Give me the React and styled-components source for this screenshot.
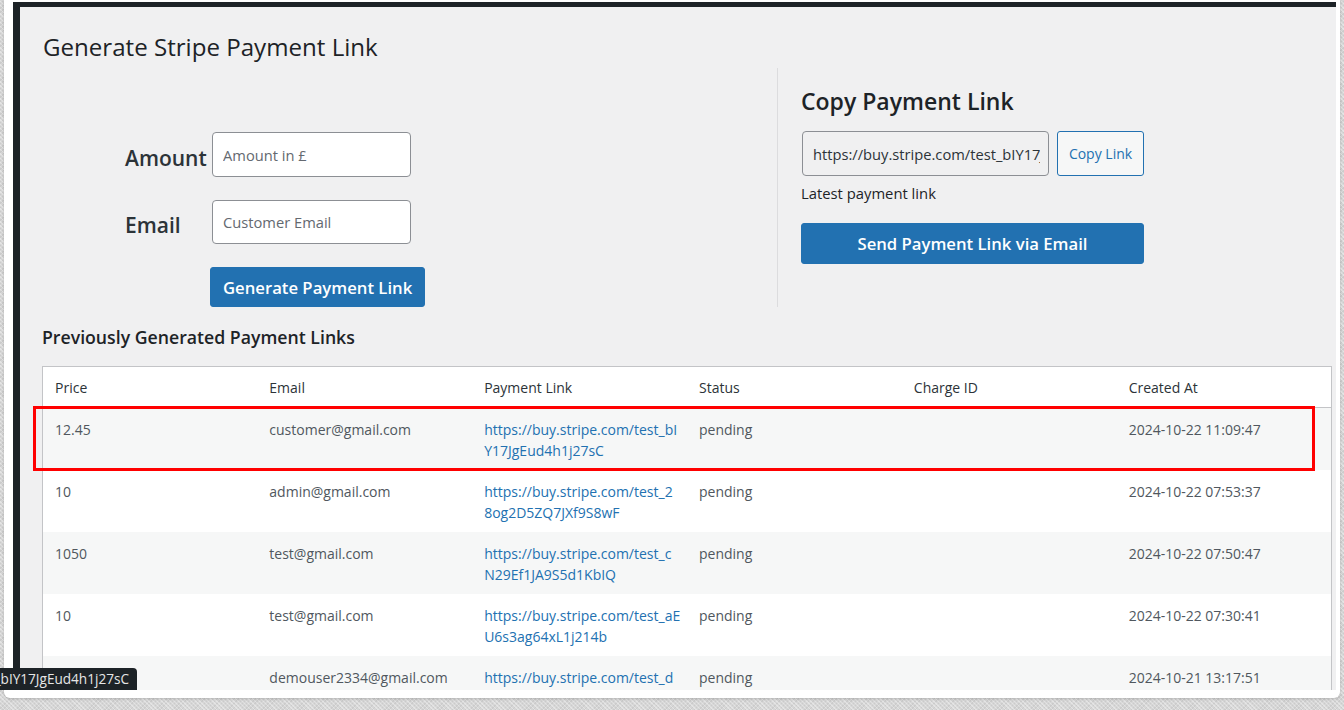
import React from "react";
import styled, { createGlobalStyle } from "styled-components";

const Global = createGlobalStyle`
  html, body { margin: 0; padding: 0; }
  body {
    width: 1344px;
    height: 710px;
    overflow: hidden;
    background-color: #d6d6d6;
    background-image:
      repeating-linear-gradient(45deg, rgba(255,255,255,0.35) 0 1px, transparent 1px 3px),
      repeating-linear-gradient(-45deg, rgba(0,0,0,0.05) 0 1px, transparent 1px 3px);
    font-family: "Open Sans", "Noto Sans", Arial, sans-serif;
    color: #3c434a;
  }
`;

const Frame = styled.div`
  position: relative;
  box-sizing: border-box;
  margin: -6px 0 0 4px;
  width: 1336px;
  height: 704px;
  padding: 8px 4px 8px 9px;
  background: #fff;
  border-radius: 6px;
  box-shadow: 0 1px 3px rgba(0,0,0,0.18);
`;

const Window = styled.div`
  box-sizing: border-box;
  height: 100%;
  border-top: 5px solid #1d2327;
  border-left: 7px solid #1d2327;
  background: #f0f0f1;
  overflow: hidden;
`;

const Wrap = styled.div`
  padding: 0 4px 0 22px;
`;

const Title = styled.h1`
  margin: 25px 0 0 1px;
  font-size: 24.1px;
  line-height: 30px;
  font-weight: 400;
  color: #1d2327;
`;

const Columns = styled.div`
  display: flex;
  margin-top: 6px;
  height: 239px;
`;

const LeftCol = styled.div`
  box-sizing: border-box;
  width: 735px;
  padding: 64px 0 0 83px;
`;

const FormGrid = styled.div`
  display: grid;
  grid-template-columns: 87px 199px;
  row-gap: 23px;
  align-items: center;
`;

const Label = styled.label`
  font-size: 21px;
  font-weight: 600;
  color: #2c3338;
  padding-top: 6px;
`;

const TextInput = styled.div`
  box-sizing: border-box;
  height: ${(p) => p.$h || 45}px;
  width: ${(p) => p.$w || 199}px;
  border: 1px solid #8c8f94;
  border-radius: 4px;
  background: ${(p) => (p.$readonly ? "#f0f0f1" : "#fff")};
  display: flex;
  align-items: center;
  padding: 0 8px 0 10px;
  font-size: 14.7px;
  color: ${(p) => (p.$readonly ? "#2c3338" : "#646970")};
`;

const InputText = styled.span`
  flex: 1;
  white-space: nowrap;
  overflow: hidden;
`;

const PrimaryButton = styled.button`
  box-sizing: border-box;
  height: ${(p) => p.$h || 40}px;
  width: ${(p) => (p.$w ? p.$w + "px" : "auto")};
  padding: 0 12px;
  border: 1px solid #2271b1;
  border-radius: 3px;
  background: #2271b1;
  color: #fff;
  font-family: inherit;
  font-size: 16.7px;
  font-weight: 600;
  cursor: pointer;
  justify-self: start;
`;

const GenButton = styled(PrimaryButton)`
  grid-column: 2;
  margin-left: -2px;
  white-space: nowrap;
`;

const RightCol = styled.div`
  box-sizing: border-box;
  flex: 1;
  border-left: 1px solid #dcdcde;
  padding: 18px 0 0 24px;
`;

const SubTitle = styled.h2`
  margin: 0 0 0 -1px;
  font-size: 23px;
  line-height: 31px;
  font-weight: 600;
  color: #1d2327;
`;

const CopyRow = styled.div`
  display: flex;
  gap: 8px;
  margin-top: 14px;
`;

const SecondaryButton = styled.button`
  box-sizing: border-box;
  height: 45px;
  width: 87px;
  border: 1px solid #2271b1;
  border-radius: 3px;
  background: #f6f7f7;
  color: #2271b1;
  font-family: inherit;
  font-size: 14px;
  cursor: pointer;
`;

const Hint = styled.p`
  margin: 7px 0 0 -1px;
  font-size: 14.8px;
  line-height: 20px;
  color: #1d2327;
`;

const SendButton = styled(PrimaryButton)`
  margin: 20px 0 0 -1px;
  display: block;
`;

const SectionTitle = styled.h3`
  margin: 19px 0 0;
  font-size: 17.7px;
  line-height: 23px;
  font-weight: 600;
  color: #1d2327;
`;

const TableBox = styled.div`
  position: relative;
  margin-top: 17px;
`;

const Table = styled.table`
  width: 1290px;
  border-collapse: collapse;
  table-layout: fixed;
  border: 1px solid #c3c4c7;
  background: #fff;
  font-size: 14px;
`;

const HeadRow = styled.tr`
  background: #fff;
`;

const Th = styled.th`
  height: 40px;
  padding: 0 12px;
  text-align: left;
  font-weight: 400;
  color: #2c3338;
  border-bottom: 1px solid #c3c4c7;
`;

const Tr = styled.tr`
  background: ${(p) => (p.$striped ? "#f6f7f7" : "#fff")};
`;

const Td = styled.td`
  height: 62px;
  box-sizing: border-box;
  padding: 11px 12px 9px;
  vertical-align: top;
  line-height: 21px;
  color: #50575e;
`;

const Link = styled.a`
  color: #2271b1;
  text-decoration: none;
  span { display: block; }
`;

const Highlight = styled.div`
  position: absolute;
  left: -9px;
  top: 40px;
  width: 1282px;
  height: 65px;
  box-sizing: border-box;
  border: 3px solid #ff0000;
  pointer-events: none;
`;

const StatusBar = styled.div`
  position: absolute;
  left: -4px;
  top: 674px;
  width: 137px;
  height: 22px;
  box-sizing: border-box;
  padding-right: 8px;
  background: #1d2327;
  border-top-right-radius: 4px;
  color: #e6e6e6;
  font-size: 13.6px;
  line-height: 22px;
  white-space: nowrap;
  overflow: hidden;
  direction: rtl;
  text-align: left;
`;

const rows = [
  { price: "12.45", email: "customer@gmail.com", link: ["https://buy.stripe.com/test_bI", "Y17JgEud4h1j27sC"], status: "pending", charge: "", date: "2024-10-22 11:09:47" },
  { price: "10", email: "admin@gmail.com", link: ["https://buy.stripe.com/test_2", "8og2D5ZQ7JXf9S8wF"], status: "pending", charge: "", date: "2024-10-22 07:53:37" },
  { price: "1050", email: "test@gmail.com", link: ["https://buy.stripe.com/test_c", "N29Ef1JA9S5d1KbIQ"], status: "pending", charge: "", date: "2024-10-22 07:50:47" },
  { price: "10", email: "test@gmail.com", link: ["https://buy.stripe.com/test_aE", "U6s3ag64xL1j214b"], status: "pending", charge: "", date: "2024-10-22 07:30:41" },
  { price: "25", email: "demouser2334@gmail.com", link: ["https://buy.stripe.com/test_d", "R4g7Kp2aX9c0mN3e"], status: "pending", charge: "", date: "2024-10-21 13:17:51" },
];

export default function App() {
  return (
    <>
      <Global />
      <Frame>
        <Window>
          <Wrap>
            <Title>Generate Stripe Payment Link</Title>
            <Columns>
              <LeftCol>
                <FormGrid>
                  <Label>Amount</Label>
                  <TextInput><InputText>Amount in £</InputText></TextInput>
                  <Label>Email</Label>
                  <TextInput $h={44}><InputText>Customer Email</InputText></TextInput>
                  <GenButton>Generate Payment Link</GenButton>
                </FormGrid>
              </LeftCol>
              <RightCol>
                <SubTitle>Copy Payment Link</SubTitle>
                <CopyRow>
                  <TextInput $readonly $w={247}>
                    <InputText>https://buy.stripe.com/test_bIY17JgEud4h1j27sC</InputText>
                  </TextInput>
                  <SecondaryButton>Copy Link</SecondaryButton>
                </CopyRow>
                <Hint>Latest payment link</Hint>
                <SendButton $w={343} $h={41}>Send Payment Link via Email</SendButton>
              </RightCol>
            </Columns>
            <SectionTitle>Previously Generated Payment Links</SectionTitle>
            <TableBox>
              <Table>
                <thead>
                  <HeadRow>
                    <Th>Price</Th>
                    <Th>Email</Th>
                    <Th>Payment Link</Th>
                    <Th>Status</Th>
                    <Th>Charge ID</Th>
                    <Th>Created At</Th>
                  </HeadRow>
                </thead>
                <tbody>
                  {rows.map((r, i) => (
                    <Tr key={i} $striped={i % 2 === 0}>
                      <Td>{r.price}</Td>
                      <Td>{r.email}</Td>
                      <Td>
                        <Link href="#">
                          <span>{r.link[0]}</span>
                          <span>{r.link[1]}</span>
                        </Link>
                      </Td>
                      <Td>{r.status}</Td>
                      <Td>{r.charge}</Td>
                      <Td>{r.date}</Td>
                    </Tr>
                  ))}
                </tbody>
              </Table>
              <Highlight />
            </TableBox>
          </Wrap>
        </Window>
        <StatusBar>https://buy.stripe.com/test_bIY17JgEud4h1j27sC</StatusBar>
      </Frame>
    </>
  );
}
